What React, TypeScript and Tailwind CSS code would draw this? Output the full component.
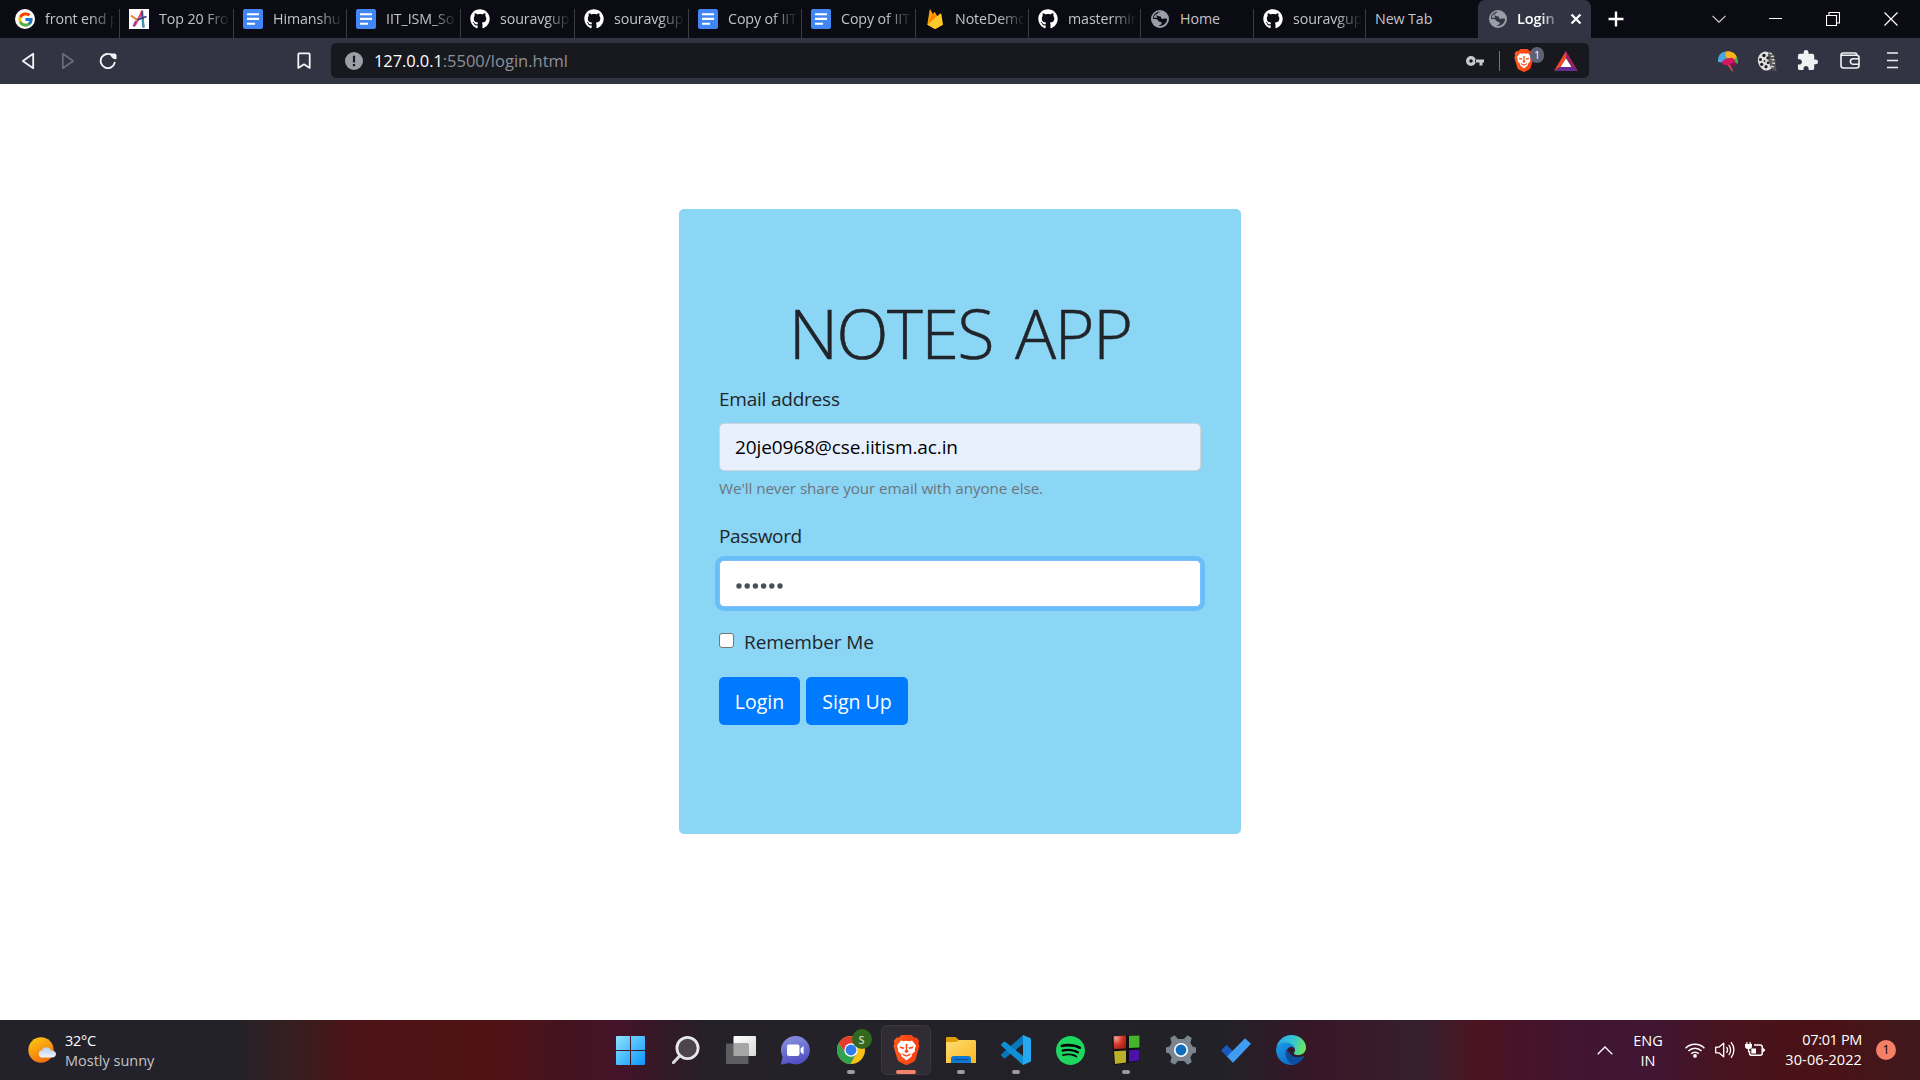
import React from "react";
import { FaGithub } from "react-icons/fa";
import { FcGoogle } from "react-icons/fc";
import { MdExtension } from "react-icons/md";
import { SiSpotify } from "react-icons/si";

/* ---------- favicons ---------- */

const GoogleIcon = () => (
  <span className="flex size-5 items-center justify-center rounded-full bg-white">
    <FcGoogle className="size-[17px]" />
  </span>
);

const LetterAIcon = () => (
  <svg viewBox="0 0 20 20" className="size-5">
    <rect width="20" height="20" fill="#fff" />
    <path d="M13.5 1.5 10.8 8" stroke="#e8332a" strokeWidth="2.2" />
    <path d="M11.5 6 5.5 17" stroke="#e2497c" strokeWidth="2.2" />
    <path d="M7 12 4.5 17.5" stroke="#a23c95" strokeWidth="2" />
    <path d="M13 2.5 14.5 18.5" stroke="#3d4f9f" strokeWidth="2.2" />
    <path d="M13.8 9.5 14.6 18.5" stroke="#2aa7b8" strokeWidth="1.6" />
    <path d="M2 6.5 9 11.5" stroke="#f08030" strokeWidth="2" />
    <path d="M8 11 17.5 7.5" stroke="#2b3e7e" strokeWidth="1.8" />
  </svg>
);

const DocsIcon = () => (
  <svg viewBox="0 0 20 20" className="size-5">
    <rect width="20" height="20" rx="2" fill="#4285f4" />
    <path d="M4 5.2h12M4 9.9h12M4 14.8h8" stroke="#fff" strokeWidth="2.1" />
  </svg>
);

const GithubIcon = () => <FaGithub className="size-5 text-white" />;

const FirebaseIcon = () => (
  <svg viewBox="0 0 20 20" className="size-5">
    <path d="M2.3 15.8 4.6.9c.1-.5.7-.6 1-.1L8 5.300l1-1.900c.2-.4.8-.4 1 0L16 13Z" fill="#ffa000" />
    <path d="M2.300 15.800 11 7 8 5.300Z" fill="#f57c00" />
    <path d="M2.300 15.800 15.300 4.600c.4-.4.900-.2 1 .4l1.700 10.800-7 3.900c-.6.3-1.200.3-1.800 0Z" fill="#ffca28" />
  </svg>
);

const GlobeIcon = () => (
  <svg viewBox="0 0 20 20" className="size-5">
    <circle cx="10" cy="10" r="9" fill="#9a9ea8" />
    <path d="M10.800 2.700C8.500 3 6.700 4.500 7 6.100c.2 1.200 1.500 1.300 2.900 1.200 1 0 1.100.8 1.200 1.600.1.900 1.200 1 2.600.8 1.300-.2 2.400-.3 3.400.3-.2 3-2 5.600-4.800 6.600-1.300.4-2.500.5-3.600.2.900-.5 2.500-.9 2.900-2.200.3-1-.5-1.700-1.600-1.800-1-.1-1.400-.6-1.800-1.300C7.700 10.400 6 10 2.900 10.100c-.2-2 .6-4.200 2.200-5.600 1.500-1.300 3.700-2 5.700-1.800Z" fill="currentColor" />
    <path d="M7.200 4.600c-1.900.8-3.200 2.400-3.600 4.300 1.600 0 2.400-.2 3.700.4-.8-1.500-1.100-3.300-.1-4.700Z" fill="#9a9ea8" />
  </svg>
);

const tabs: { title: string; icon?: React.ReactNode; width: string; fade?: boolean }[] = [
  { title: "front end p", icon: <GoogleIcon />, width: "w-[120px] pl-[15px]", fade: true },
  { title: "Top 20 Fro", icon: <LetterAIcon />, width: "w-[114px] pl-[9px]", fade: true },
  { title: "Himanshu", icon: <DocsIcon />, width: "w-[113px] pl-[9px]", fade: true },
  { title: "IIT_ISM_So", icon: <DocsIcon />, width: "w-[114px] pl-[9px]", fade: true },
  { title: "souravgup", icon: <GithubIcon />, width: "w-[114px] pl-[9px]", fade: true },
  { title: "souravgup", icon: <GithubIcon />, width: "w-[114px] pl-[9px]", fade: true },
  { title: "Copy of IIT", icon: <DocsIcon />, width: "w-[113px] pl-[9px]", fade: true },
  { title: "Copy of IIT", icon: <DocsIcon />, width: "w-[114px] pl-[9px]", fade: true },
  { title: "NoteDemo", icon: <FirebaseIcon />, width: "w-[113px] pl-[9px]", fade: true },
  { title: "mastermin", icon: <GithubIcon />, width: "w-[112px] pl-[9px]", fade: true },
  { title: "Home", icon: <GlobeIcon />, width: "w-[113px] pl-[9px]" },
  { title: "souravgup", icon: <GithubIcon />, width: "w-[112px] pl-[9px]", fade: true },
];

/* ---------- Brave ---------- */

const BraveLogo = ({ className }: { className: string }) => (
  <svg viewBox="0 0 27 30" preserveAspectRatio="none" className={className}>
    <defs>
      <linearGradient id="brave" x1="0" y1="0" x2="1" y2="0">
        <stop offset="0" stopColor="#ff5a1c" />
        <stop offset="1" stopColor="#fb3b12" />
      </linearGradient>
    </defs>
    <path d="M8.500 0h10l2.800 2.800 2.200-.3L26.300 6l-.8 2.300 1 3-4 13.200c-.3 1-1 1.700-1.800 2.300L14.600 29.700c-.7.4-1.500.4-2.200 0l-6.100-2.900c-.8-.6-1.500-1.300-1.800-2.300L.5 11.300l1-3L.7 6l2.800-3.500 2.200.3Z" fill="url(#brave)" />
    <path d="m8 5.500 2.500.8 3-.6 3 .6 2.500-.8 4 5-1.200 3.500.2 2.200-3.500 3.300.5 1.500-5.500 4.500-5.500-4.500.5-1.500L5 16.200l.2-2.200L4 10.500Z" fill="#fff" />
    <path d="m6.500 11.300 5 1.100-.8 1.700-3.500-.8ZM20.500 11.300l-5 1.100.8 1.700 3.500-.8ZM12.600 9h1.800l-.2 5.500 1.600 2.300-2.300 1.200-2.300-1.200 1.600-2.300ZM9 18.200l4.500 2 4.500-2-1 2-3.500 1.600-3.500-1.600Z" fill="#fb4a1b" />
  </svg>
);

/* ---------- browser chrome ---------- */

const TabStrip = () => (
  <div className="flex h-[38px] bg-[#0b0b14] text-[14.25px] leading-5 tracking-[-0.1px] text-[#c3c4c8]">
    {tabs.map((t, i) => (
      <div key={i} className={`flex shrink-0 pt-[9px] ${t.width}`}>
        <span className="size-5 shrink-0 text-[#0b0b14]">{t.icon}</span>
        <span
          className={
            t.fade
              ? "ml-[10px] min-w-0 flex-1 whitespace-nowrap [mask-image:linear-gradient(to_left,transparent_3px,black_28px)]"
              : "ml-[10px] min-w-0 flex-1 whitespace-nowrap"
          }
        >
          {t.title}
        </span>
        <span className="w-px bg-[#3c3d42]" />
      </div>
    ))}
    <div className="w-[112px] shrink-0 pt-[9px] pl-[9px]">New Tab</div>
    <div className="flex w-[113px] shrink-0 rounded-t-[7px] bg-[#323443] pt-[9px] pl-[10px] font-semibold text-white">
      <span className="size-5 shrink-0 text-[#323443]">
        <GlobeIcon />
      </span>
      <span className="ml-[9px] w-[44px] text-[14.5px] [mask-image:linear-gradient(to_left,transparent_1px,black_20px)]">Login</span>
      <svg viewBox="0 0 12 12" className="mt-1 ml-[9px] size-3">
        <path d="m1.500 1.500 9 9m0-9-9 9" stroke="#fff" strokeWidth="2.200" />
      </svg>
    </div>
    <svg viewBox="0 0 16 16" className="mt-[11px] ml-[17px] size-4">
      <path d="M8 .5v15M.5 8h15" stroke="#fff" strokeWidth="2.400" />
    </svg>
    <svg viewBox="0 0 14 8" className="mt-[15px] ml-[88px] h-2 w-[14px]">
      <path d="m.5.8 6.500 6.400L13.500.8" fill="none" stroke="#d5d5d8" strokeWidth="1.100" />
    </svg>
    <div className="mt-[18px] ml-[43px] h-px w-[13px] bg-white" />
    <svg viewBox="0 0 14 14" className="mt-3 ml-[44px] size-[14px]">
      <path d="M.5 3.500h10v10H.5zM3 3V.5h10.500V11H11" fill="none" stroke="#fff" strokeWidth="1.100" />
    </svg>
    <svg viewBox="0 0 14 14" className="mt-3 ml-[44px] size-[14px]">
      <path d="m.5.5 13 13m0-13-13 13" stroke="#fff" strokeWidth="1.200" />
    </svg>
  </div>
);

const Toolbar = () => (
  <div className="flex h-[46px] items-center bg-[#323443] pb-px">
    <svg viewBox="0 0 14 18" className="ml-[21px] h-[18px] w-[14px]">
      <path d="M12.200 1.800v14.400L1.800 9Z" fill="none" stroke="#f4f4f6" strokeWidth="1.800" strokeLinejoin="round" />
    </svg>
    <svg viewBox="0 0 14 18" className="ml-[26px] h-[18px] w-[14px]">
      <path d="M1.800 1.800v14.400L12.200 9Z" fill="none" stroke="#6b6d78" strokeWidth="1.700" strokeLinejoin="round" />
    </svg>
    <svg viewBox="0 0 18 18" className="ml-6 size-[18px]">
      <path d="M15.700 10.600A7.100 7.100 0 1 1 13.300 3.500" fill="none" stroke="#f4f4f6" strokeWidth="1.900" strokeLinecap="round" />
      <path d="M11.300 1.500h3.500c1.500 0 2.700.6 2.700 2v3.600c-2.400.3-3.300-.4-4.400-1.600-1.200-1.100-1.800-2.400-1.800-4Z" fill="#f4f4f6" />
    </svg>
    <svg viewBox="0 0 14 18" className="ml-[180px] h-[18px] w-[14px]">
      <path d="M1.300 2.300c0-.6.400-1 1-1h9.400c.6 0 1 .4 1 1v13.600L7 12.300l-5.700 3.600Z" fill="none" stroke="#f4f4f6" strokeWidth="1.800" strokeLinejoin="round" />
    </svg>
    <div className="ml-5 flex h-[35px] w-[1258px] items-center rounded-[5px] bg-[#17191f]">
      <svg viewBox="0 0 18 18" className="ml-[14px] size-[18px]">
        <circle cx="9" cy="9" r="9" fill="#9c9ea8" />
        <path d="M9 3.800v6.700M9 12v2.200" stroke="#17191f" strokeWidth="2.200" />
      </svg>
      <span className="ml-[11px] text-[16.5px] leading-6 tracking-[-0.1px] text-white">127.0.0.1</span>
      <span className="text-[16.5px] leading-6 text-[#8d9096]">:5500/login.html</span>
      <svg viewBox="0 0 18 10" className="ml-auto h-[10px] w-[18px]">
        <path d="M5 0a5 5 0 1 1-.001 10A5 5 0 0 1 5 0Zm0 3.200a1.800 1.800 0 1 0 .001 3.600A1.800 1.800 0 0 0 5 3.200ZM9 3.600h9v3h-1.500v3h-3v-3H9Z" fill="#c9cacd" fillRule="evenodd" />
      </svg>
      <span className="ml-[15px] h-5 w-px bg-[#74767c]" />
      <span className="relative ml-[14px] flex h-[23px] w-[20px]">
        <BraveLogo className="h-[23px] w-[20px]" />
        <span className="absolute -top-[2px] left-[16px] flex h-4 w-[14px] items-center justify-center rounded-full bg-[#5f6272] text-[10px] leading-none text-white">1</span>
      </span>
      <svg viewBox="0 0 24 20" className="mr-[11px] ml-[20px] h-5 w-6">
        <path d="M12 0 0 20l6-4 6-9Z" fill="#ff4724" />
        <path d="m12 0 12 20-6-4-6-9Z" fill="#9e1f63" />
        <path d="M0 20h24l-6-4.200H6Z" fill="#662d91" />
        <path d="m12 7.200 5.600 8.800H6.400Z" fill="#fff" />
      </svg>
    </div>
    {/* extensions */}
    <svg viewBox="0 0 22 22" className="ml-[128px] size-[22px]">
      <path d="M1 12c-.6-6 2.500-10 8-10.500l2 3.500-1.500 4L5 12.500Z" fill="#4da5de" />
      <path d="M9 1.500c5-.7 9.500 1.500 11 6l-1 3-3.500-2-5.500 0-1.500-3Z" fill="#f9b51c" />
      <path d="M19.500 7c1.700 1.700 2 4.500 1.200 6.800L18.500 14l-1-4.500Z" fill="#3fae49" />
      <path d="M5 12.500c1-2.500 3.500-4 6-4l4-1 3 2.500-1.500 4L12 15c-2.500.5-6 .5-7-2.500Z" fill="#d8165f" />
      <path d="m12 14 6-1.500 2.500 1.500c-.5 1.800-3.500 2.700-6 2.500l-2.500-.8Z" fill="#7b1450" />
      <path d="m10.500 14.500 4.500 7 1-.8-3-6Z" fill="#e54b52" />
    </svg>
    <svg viewBox="0 0 22 22" className="ml-[17px] size-[22px]">
      <path d="M13 1.500c3 0 5.500 4 6 9s-1 10-4.500 10l6.500.3c-1.500-2-1-6-1.500-10S16.500 1 13 1.500Z" fill="#555" />
      <ellipse cx="10" cy="11" rx="8" ry="9.500" fill="#dedede" transform="rotate(-14 10 11)" />
      <ellipse cx="15.500" cy="10.500" rx="3" ry="9" fill="#5a5a5a" transform="rotate(-12 15 10.500)" />
      <path d="m13.500 3 2.500 1m-1 2.500 3-.3m-2.500 3.500 3 .2M16 13l3 .3m-4 3 3 .7" stroke="#e8e8e8" strokeWidth="1.200" />
      <g fill="#1d1d1f">
        <circle cx="8" cy="5.500" r="1.700" />
        <circle cx="4.500" cy="9.500" r="1.500" />
        <circle cx="5.700" cy="14.300" r="1.600" />
        <circle cx="10" cy="16.700" r="1.600" />
        <circle cx="11.800" cy="8" r="1.400" />
        <circle cx="12" cy="12.800" r="1.300" />
        <circle cx="8.500" cy="11" r=".9" />
      </g>
    </svg>
    <MdExtension className="ml-[18px] size-[23px] text-[#f1f1f3]" />
    <svg viewBox="0 0 20 17" className="ml-[21px] h-[17px] w-5">
      <path d="M1 3.200C1 2 1.900 1 3.200 1h11.500c1.500 0 2.200.9 2.200 2.300M1 3.300h15.500c1.500 0 2.500.9 2.500 2.400v7.800c0 1.500-1 2.500-2.500 2.500h-13C2 16 1 15 1 13.500ZM19 6.700h-5.800a2.700 2.700 0 0 0 0 5.600H19" fill="none" stroke="#f1f1f3" strokeWidth="1.600" />
    </svg>
    <svg viewBox="0 0 11 17" className="ml-[27px] h-[17px] w-[11px]">
      <path d="M0 1h11M0 8.500h11M0 15.500h11" stroke="#f1f1f3" strokeWidth="1.600" />
    </svg>
  </div>
);

/* ---------- page ---------- */

const LoginCard = () => (
  <form className="mx-auto mt-[125px] h-[625px] w-[562px] rounded-[5px] bg-[#8bd5f5] px-10 pt-[82px] text-[19px] leading-[30px] text-[#212529]">
    <h1 className="mb-2 text-center text-[68.5px] leading-[84px] font-light tracking-[-1.7px] [word-spacing:6px] [-webkit-text-stroke:0.5px_#212529]">NOTES APP</h1>
    <label className="mb-[9px] block pt-px tracking-[-0.22px]">Email address</label>
    <div className="h-12 rounded-[5px] border border-[#ced4da] bg-[#e8f0fe] px-[15px] leading-[47px] tracking-[-0.1px] text-black">20je0968@cse.iitism.ac.in</div>
    <small className="mt-[5px] block text-[15.2px] leading-6 tracking-[-0.06px] text-[#6c757d]">We'll never share your email with anyone else.</small>
    <label className="mt-5 mb-[9px] block pt-px tracking-[-0.35px]">Password</label>
    <div className="h-[47px] rounded-[5px] border border-[#80bdff] bg-white px-4 pt-[22px] shadow-[0_0_0_4px_rgba(0,123,255,0.25)]">
      <svg viewBox="0 0 48 6" className="h-[6px] w-12" fill="#495057">
        <circle cx="3" cy="3" r="2.700" />
        <circle cx="11.200" cy="3" r="2.700" />
        <circle cx="19.400" cy="3" r="2.700" />
        <circle cx="27.600" cy="3" r="2.700" />
        <circle cx="35.800" cy="3" r="2.700" />
        <circle cx="44" cy="3" r="2.700" />
      </svg>
    </div>
    <label className="mt-5 flex tracking-[-0.1px]">
      <span className="mt-[6px] mr-[10px] size-[15px] rounded-[3px] border border-[#767676] bg-white" />
      Remember Me
    </label>
    <div className="mt-5 flex gap-[6px] text-[19.5px] text-white">
      <button type="button" className="h-12 w-[81px] rounded-[5px] bg-[#007bff] pt-[2px]">Login</button>
      <button type="button" className="h-12 w-[102px] rounded-[5px] bg-[#007bff] pt-[2px]">Sign Up</button>
    </div>
  </form>
);

/* ---------- taskbar icons ---------- */

const WindowsIcon = () => (
  <svg viewBox="0 0 29 29" className="size-[29px]">
    <defs>
      <linearGradient id="win" x1="0" y1="0" x2="1" y2="1" gradientUnits="objectBoundingBox">
        <stop offset="0" stopColor="#8fe3ff" />
        <stop offset="1" stopColor="#0a95fb" />
      </linearGradient>
    </defs>
    <path d="M1 0h13v14H0V1a1 1 0 0 1 1-1ZM15 0h13a1 1 0 0 1 1 1v13H15ZM0 15h14v14H1a1 1 0 0 1-1-1ZM15 15h14v13a1 1 0 0 1-1 1H15Z" fill="url(#win)" />
  </svg>
);

const SearchIcon = () => (
  <svg viewBox="0 0 28 28" className="size-7">
    <path d="m9.500 18-8 8.500" stroke="#d8dadc" strokeWidth="3.200" strokeLinecap="round" />
    <circle cx="15.500" cy="12" r="10.600" fill="#4d444c" stroke="#e6e8ea" strokeWidth="2.800" />
  </svg>
);

const TaskViewIcon = () => (
  <svg viewBox="0 0 30 28" className="h-7 w-[30px]">
    <defs>
      <linearGradient id="tv" x1="0" y1="0" x2="1" y2="1">
        <stop offset="0" stopColor="#fff" />
        <stop offset="1" stopColor="#d9d9d9" />
      </linearGradient>
    </defs>
    <rect x="7.500" y="0" width="22.500" height="20" rx="1" fill="url(#tv)" />
    <rect x="0" y="7.500" width="22.500" height="20.500" rx="1" fill="#5d5d5f" />
    <path d="M7.500 7.500h15V20h-15Z" fill="#a5a5a5" />
  </svg>
);

const ChatIcon = () => (
  <svg viewBox="0 0 29 29" className="size-[29px]">
    <defs>
      <linearGradient id="chat" x1="0" y1="0" x2=".3" y2="1">
        <stop offset="0" stopColor="#8f84d8" />
        <stop offset=".3" stopColor="#7c84d8" />
        <stop offset="1" stopColor="#5350c4" />
      </linearGradient>
    </defs>
    <path d="M14.500 0a14.200 14.200 0 1 1-6 27L1 28.600c-.8.200-1.300-.4-1-1.100l1.600-6.600A14.200 14.200 0 0 1 14.500 0Z" fill="url(#chat)" />
    <rect x="6" y="8.500" width="12.500" height="11.500" rx="2" fill="#fff" />
    <path d="m19.600 12.500 3-2.600v8.700l-3-2.600Z" fill="#fff" />
  </svg>
);

const ChromeIcon = () => (
  <div className="relative size-7">
    <svg viewBox="0 0 48 48" className="size-7">
      <circle cx="24" cy="24" r="24" fill="#fbc116" />
      <path d="M3.200 12A24 24 0 0 0 23 48l10-18-9-6-9 6Z" fill="#30a350" />
      <path d="M3.200 12a24 24 0 0 1 41.600 1H24l-9 17Z" fill="#e33b2e" />
      <circle cx="24" cy="24" r="11.500" fill="#fff" />
      <circle cx="24" cy="24" r="9.300" fill="#2f7ded" />
    </svg>
    <span className="absolute -top-[7px] left-[15px] flex size-5 items-center justify-center rounded-full bg-[#33691e] text-[11px] leading-none font-semibold text-[#c8d6c0]">S</span>
  </div>
);

const FolderIcon = () => (
  <svg viewBox="0 0 30 26" className="h-[26px] w-[30px]">
    <defs>
      <linearGradient id="fold" x1="0" y1="0" x2="1" y2="1">
        <stop offset="0" stopColor="#ffdc72" />
        <stop offset="1" stopColor="#fbb820" />
      </linearGradient>
    </defs>
    <path d="M0 1.200C0 .5.500 0 1.200 0h8.300l3.500 3H28v6H0Z" fill="#dd9e07" />
    <path d="M0 5h10l3-2h15.500c.8 0 1.500.6 1.500 1.500V26H0Z" fill="url(#fold)" />
    <path d="M5 26v-4.500C5 20 6 19 7.500 19h15c1.500 0 2.500 1 2.500 2.500V26Z" fill="#0f78d0" />
    <path d="M8.500 22.500h13" stroke="#0a4f96" strokeWidth="1.200" />
  </svg>
);

const VsCodeIcon = () => (
  <svg viewBox="0 0 30 30" className="size-[30px]">
    <path d="M22 0 .7 18.800c-.8.7-.8 1.500 0 2.300L2.500 23c.6.5 1.300.5 2 0L22 9Z" fill="#0877b9" />
    <path d="M22 30 .7 11c-.8-.7-.8-1.500 0-2.300L2.500 7c.6-.5 1.300-.5 2 0L22 21Z" fill="#0f8fd6" />
    <path d="m22 0 7 3c.6.300 1 .8 1 1.500v21c0 .7-.4 1.200-1 1.500L22 30Z" fill="#27a9f2" />
  </svg>
);

const CubesIcon = () => (
  <svg viewBox="0 0 28 30" className="h-[30px] w-7">
    <defs>
      <radialGradient id="red" cx=".2" cy=".2" r="1">
        <stop offset="0" stopColor="#f0a090" />
        <stop offset=".5" stopColor="#d5362a" />
        <stop offset="1" stopColor="#a01a15" />
      </radialGradient>
    </defs>
    <path d="M0 1 28 0v26L2 30Z" fill="#120f12" />
    <path d="M1.500 1.200 14 .5v13L2 14Z" fill="url(#red)" />
    <path d="M17 .8 27.500.5V12.500L17 13Z" fill="#46b32c" />
    <path d="M2 16.200 14 15.500v12L3 29Z" fill="#b9b12c" />
    <path d="m17 15.200 10.500-.8v11L17 26.800Z" fill="#4b12a8" />
  </svg>
);

const SettingsIcon = () => (
  <svg viewBox="0 0 30 30" className="size-[30px]">
    <path
      d="M12 4.500 8.500.8 4.800 3l1.300 4.900-2.400 4L0 13v4l3.700 1.200 2.400 4L4.800 27l3.700 2.200L12 25.500h6l3.500 3.700 3.700-2.200-1.300-4.800 2.400-4L30 17v-4l-3.700-1.100-2.400-4L25.200 3 21.500.8 18 4.500Z"
      fill="#7b858e"
      stroke="#7b858e"
      strokeLinejoin="round"
    />
    <circle cx="15" cy="15" r="7" fill="#fff" />
    <circle cx="15" cy="15" r="5.400" fill="#0f6cbd" />
  </svg>
);

const TodoIcon = () => (
  <svg viewBox="0 0 30 25" className="h-[25px] w-[30px]">
    <path d="m0 12.500 5.500-5.700 6.500 6.500L12 24.500Z" fill="#185abd" />
    <path d="m6 18.500 18-18.300 6 5.500L12 24.700Z" fill="#3f9cf0" />
  </svg>
);

const EdgeIcon = () => (
  <svg viewBox="0 0 30 30" className="size-[30px]">
    <defs>
      <linearGradient id="e1" x1="0" y1=".3" x2="1" y2=".5">
        <stop offset="0" stopColor="#2aa9e8" />
        <stop offset=".55" stopColor="#35c5d2" />
        <stop offset="1" stopColor="#6be85a" />
      </linearGradient>
      <linearGradient id="e2" x1="0" y1="0" x2=".6" y2="1">
        <stop offset="0" stopColor="#1b9de2" />
        <stop offset="1" stopColor="#0d6fd0" />
      </linearGradient>
    </defs>
    <path d="M.5 12C2 5 8 0 15 0c9 0 15 6 15 12.500 0 5-3.800 7.500-8 7.500-3.500 0-4.500-1.300-4-2.300 1.300-1.600 1.500-3.700.2-5.500C14 7 4 7.500.5 12Z" fill="url(#e1)" />
    <path d="M0 15C0 10 4.500 7.500 9.500 7.500c5 0 9.300 3.300 9.500 7-1-2-3-3-5-2.500-4 1.500-5.500 6-3.500 10.500 1.800 4 4.500 6.500 8 7A15 15 0 0 1 0 15Z" fill="url(#e2)" />
    <path d="M11.500 14.200C8.500 18 9.500 27 18 29.700c4.500-1 8.500-4.500 10-8 .3-.7-.3-1-1-.7-6 3-13.500.5-15.500-6.800Z" fill="#0c4fa0" />
  </svg>
);

const dot = <span className="h-1 w-2 rounded-full bg-[#9b9a9e]" />;

const apps: { icon: React.ReactNode; open?: boolean }[] = [
  { icon: <WindowsIcon /> },
  { icon: <SearchIcon /> },
  { icon: <TaskViewIcon /> },
  { icon: <ChatIcon /> },
  { icon: <ChromeIcon />, open: true },
  { icon: null },
  { icon: <FolderIcon />, open: true },
  { icon: <VsCodeIcon />, open: true },
  {
    icon: (
      <span className="grid size-[29px] place-items-center rounded-full bg-black">
        <SiSpotify className="size-[29px] text-[#1ed760]" />
      </span>
    ),
  },
  { icon: <CubesIcon />, open: true },
  { icon: <SettingsIcon /> },
  { icon: <TodoIcon /> },
  { icon: <EdgeIcon /> },
];

const Taskbar = () => (
  <div className="flex h-[60px] bg-[linear-gradient(90deg,#232129_0%,#232129_12%,#351f20_15%,#4c1316_18.5%,#501214_26%,#45131e_29%,#431329_32.500%,#331926_34.500%,#242128_37%,#232128_64%,#361728_68%,#381a29_71%,#352030_74%,#4c1420_77%,#471329_79%,#401532_83%,#401633_86%,#48131d_90%,#4a1216_95%,#3f191c_100%)] text-[14.5px] text-white">
    <div className="flex w-[603px] pt-[10px] pl-7">
      <svg viewBox="0 0 28 26" className="mt-[7px] h-[26px] w-7">
        <defs>
          <linearGradient id="sun" x1="0" y1="0" x2=".5" y2="1">
            <stop offset="0" stopColor="#ffce10" />
            <stop offset="1" stopColor="#f07210" />
          </linearGradient>
          <linearGradient id="cloud" x1="0" y1="0" x2="0" y2="1">
            <stop offset="0" stopColor="#b9cdea" />
            <stop offset="1" stopColor="#eef5ff" />
          </linearGradient>
        </defs>
        <circle cx="13" cy="13" r="12.700" fill="url(#sun)" />
        <path d="M14 20.500a3.700 3.700 0 0 1-.2-7.300 5 5 0 0 1 9.200.3c2.700-.2 5 1.300 5 3.500s-1.700 3.500-3.700 3.500Z" fill="url(#cloud)" />
      </svg>
      <div className="mt-px ml-[9px] leading-5">
        <div className="tracking-[-0.3px]">32°C</div>
        <div className="text-[#c5c4c6]">Mostly sunny</div>
      </div>
    </div>
    {apps.map((a, i) =>
      a.icon === null ? (
        <div key={i} className="w-[55px] pt-[5px] pl-[3px]">
          <div className="flex h-[50px] w-[50px] flex-col items-center rounded-[6px] border border-[#3a373e] bg-[#2f2c33] pt-[9px]">
            <BraveLogo className="h-[30px] w-[27px]" />
            <span className="mt-[5px] h-1 w-5 rounded-full bg-[#f4836b]" />
          </div>
        </div>
      ) : (
        <div key={i} className="flex w-[55px] flex-col items-center">
          <div className="flex h-[50px] items-center pt-[10px]">{a.icon}</div>
          {a.open && dot}
        </div>
      ),
    )}
    <div className="ml-auto flex items-center">
      <svg viewBox="0 0 16 9" className="h-[9px] w-4">
        <path d="m.7 8.300 7.300-7.300 7.300 7.300" fill="none" stroke="#fff" strokeWidth="1.300" />
      </svg>
      <div className="mt-[2px] ml-5 w-[30px] text-center leading-5">
        <div>ENG</div>
        <div>IN</div>
      </div>
      <svg viewBox="0 0 20 16" className="ml-[22px] h-4 w-5">
        <g fill="none" stroke="#fff" strokeWidth="1.500">
          <path d="M.6 6.200a13.300 13.300 0 0 1 18.800 0" />
          <path d="M3.400 9a9.300 9.300 0 0 1 13.200 0" />
          <path d="M6.200 11.800a5.400 5.400 0 0 1 7.600 0" />
        </g>
        <circle cx="10" cy="13.900" r="1.900" fill="#fff" />
      </svg>
      <svg viewBox="0 0 20 18" className="ml-[10px] h-[18px] w-5">
        <g fill="none" stroke="#fff" strokeWidth="1.300" strokeLinejoin="round">
          <path d="M.7 6.200h3.200l4.800-4v13.600l-4.800-4H.7Z" />
          <path d="M11.500 6.200a4.500 4.500 0 0 1 0 5.600M13.700 3.800a8 8 0 0 1 0 10.400M16 1.300a11.700 11.700 0 0 1 0 15.400" />
        </g>
      </svg>
      <svg viewBox="0 0 20 18" className="ml-[10px] h-[18px] w-5">
        <path d="M9 4h6.200c1.200 0 2 .8 2 2v6.300c0 1.200-.8 2-2 2H6.500c-1.200 0-2-.8-2-2V10" fill="none" stroke="#fff" strokeWidth="1.500" />
        <path d="M18 7.300c1.300 0 2 .7 2 1.800s-.7 1.900-2 1.900ZM6.300 7.500H11v5H6.300ZM1.300 1h1.200v2h2V1h1.200v2H7v2.600C7 7 6 7.800 4.200 8v3H2.900V8C1 7.800 0 7 0 5.600V3h1.300Z" fill="#fff" />
      </svg>
      <div className="ml-[17px] w-20 text-right leading-5 whitespace-nowrap">
        <div className="tracking-[-0.35px]">07:01 PM</div>
        <div className="tracking-[0.1px]">30-06-2022</div>
      </div>
      <span className="mr-6 ml-[14px] flex size-5 items-center justify-center rounded-full bg-[#f58066] text-[12.500px] leading-none text-black">1</span>
    </div>
  </div>
);

export default function App() {
  return (
    <div className="flex h-[1080px] w-[1920px] flex-col overflow-hidden bg-white font-['Open_Sans',sans-serif]">
      <TabStrip />
      <Toolbar />
      <main className="min-h-0 flex-1">
        <LoginCard />
      </main>
      <Taskbar />
    </div>
  );
}
